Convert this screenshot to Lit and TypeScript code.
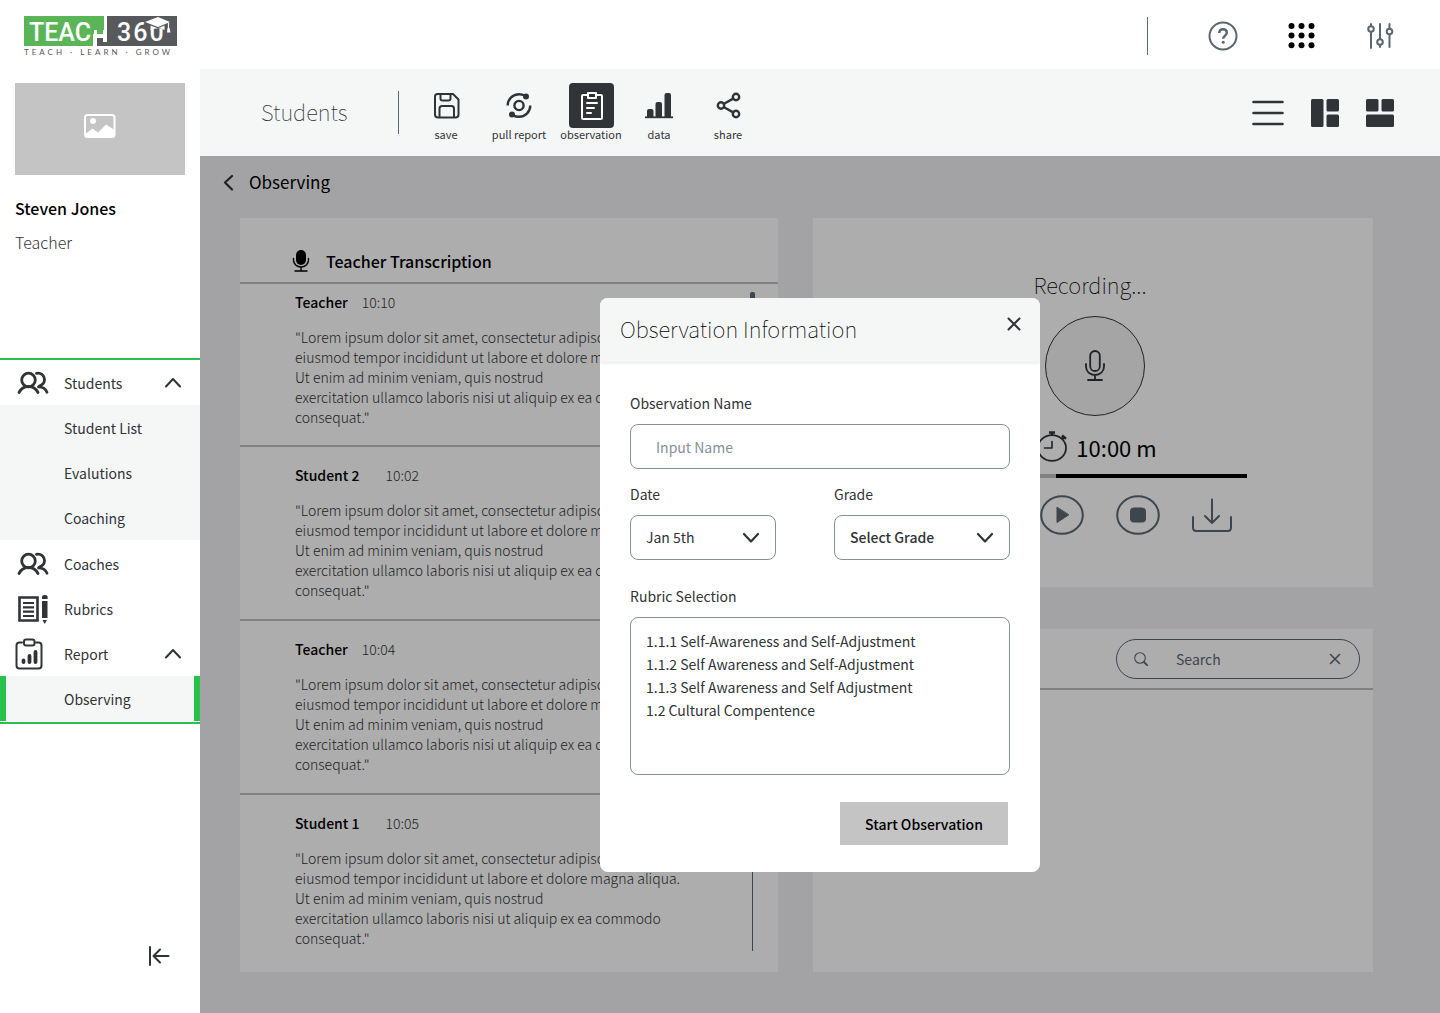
import { LitElement, html, css, svg, nothing } from "lit";
import { customElement, property, state } from "lit/decorators.js";
import { classMap } from "lit/directives/class-map.js";

/* ---------- shared styles ---------- */

const base = css`
  * {
    box-sizing: border-box;
  }
  :host {
    font-family: "Noto Sans CJK SC", "Noto Sans", sans-serif;
    font-size: 14px;
    line-height: 20px;
    color: #303437;
  }
  h1,
  h2,
  h3,
  p,
  ul {
    margin: 0;
    padding: 0;
    list-style: none;
  }
  button {
    font: inherit;
    color: inherit;
    background: none;
    border: 0;
    padding: 0;
    cursor: pointer;
  }
  a {
    color: inherit;
    text-decoration: none;
  }
  svg {
    display: block;
    flex: none;
  }
`;

/* ---------- icons ---------- */

const icon = (w: number, h: number, body: unknown) => html`<svg
  width=${w}
  height=${h}
  viewBox="0 0 ${w} ${h}"
  fill="none"
  stroke="currentColor"
  stroke-width="2"
  stroke-linecap="round"
  stroke-linejoin="round"
  aria-hidden="true"
>
  ${body}
</svg>`;

const icons = {
  people: icon(
    32,
    24,
    svg`<g stroke-width="2.800">
      <circle cx="11.500" cy="9" r="6.800"/>
      <path d="M2 21.500c2-4 5.200-6 9.500-6s7.500 2 9.500 6"/>
      <path d="M19.500 2.300c4.500-.8 8 2 8 6.200 0 3-1.800 5.200-4.500 6.200l-1.500 1.200c4 0 7 1.800 8.500 5.300"/>
    </g>`
  ),
  rubric: icon(
    34,
    32,
    svg`<path d="M3.500 4.500h18v23h-18z" stroke-width="2.600" stroke-linejoin="miter"/>
      <path d="M7 10h11M7 14.300h11M7 18.600h11M7 23h11" stroke-width="2.200" stroke-linecap="butt"/>
      <path d="M26 6V4q0-2 2.800-2t2.800 2v2zM26 8h5.500v17H26zM26.500 27H31l-2.300 4z" fill="currentColor" stroke="none"/>`
  ),
  report: icon(
    36,
    32,
    svg`<path d="M7 4.500H4.500Q1.500 4.500 1.500 7.500v20q0 3 3 3h19q3 0 3-3v-20q0-3-3-3H21" />
      <rect x="9" y="1.500" width="10.500" height="6" rx="2"/>
      <path d="M8.500 22.500V24M14.500 18V24M20.500 14V24" stroke-width="3.800"/>`
  ),
  chevronUp: icon(18, 11, svg`<path d="M2 9.500 9 2l7 7.500" stroke-width="2"/>`),
  chevronDown: icon(18, 11, svg`<path d="M2 2l7 7.500L16 2" stroke-width="2.200"/>`),
  chevronLeft: icon(11, 17, svg`<path d="M9 2 2 8.500 9 15.500" stroke-width="2.200"/>`),
  collapse: icon(22, 20, svg`<path d="M2 1v18M20.500 10H5.500M12 3.500 5.500 10l6.500 6.500" stroke-width="2"/>`),
  photo: icon(
    32,
    24,
    svg`<rect x="1" y="1" width="29.500" height="22" rx="2.500"/>
      <circle cx="9" cy="7" r="3" fill="currentColor" stroke="none"/>
      <path d="M2 19.500 8.500 14.500l5.500 4L22 10.500l8 5V22H2z" fill="currentColor" stroke="none"/>`
  ),
  help: icon(
    30,
    30,
    svg`<circle cx="15" cy="15" r="13.500"/>
      <path d="M11.300 12c0-2.300 1.500-3.700 3.800-3.700 2.200 0 3.700 1.300 3.700 3.300 0 2.900-3.600 3-3.600 6.200" stroke-width="2.400" stroke-linecap="butt"/>
      <circle cx="15.200" cy="21.300" r="1.500" fill="currentColor" stroke="none"/>`
  ),
  apps: icon(
    28,
    28,
    svg`${[4, 13.6, 23.2].map((y) =>
      [3.5, 13.5, 23.5].map((x) => svg`<circle cx=${x} cy=${y} r="3" fill="currentColor" stroke="none"/>`)
    )}`
  ),
  sliders: icon(
    28,
    28,
    svg`<path d="M5 2v1.500M5 10v16M14 2v14.500M14 23v2M23.500 2v4.500M23.500 13v12"/>
      <circle cx="5" cy="7" r="2.800"/><circle cx="14" cy="20" r="2.800"/><circle cx="23.500" cy="9.500" r="2.800"/>`
  ),
  save: icon(
    27,
    27,
    svg`<path d="M4.500 2h15.500L25.500 7.500v15q0 3-3 3H5q-3 0-3-3V4.500q0-2.500 2.500-2.500z"/>
      <path d="M7.500 2v4.500q0 2 2 2h6q2 0 2-2V2M6.500 25v-8.500q0-2.500 2.500-2.500h9.500q2.500 0 2.500 2.500V25"/>`
  ),
  pull: icon(
    27,
    27,
    svg`<circle cx="13" cy="13.500" r="4.600" stroke-width="2.400"/>
      <path d="M1.700 13.500C1.700 7 7 2.200 13 2.200c2 0 4 .3 5.500 1.300M24.300 13.500c0 6.500-5.300 11.300-11.300 11.300-2 0-4-.3-5.500-1.300" stroke-linecap="butt" stroke-width="2.400"/>
      <circle cx="20" cy="4.500" r="3" fill="currentColor" stroke="none"/>
      <circle cx="6" cy="22.500" r="3" fill="currentColor" stroke="none"/>`
  ),
  clipboard: icon(
    24,
    30,
    svg`<path d="M8 4H4q-1 0-1 1v22q0 1 1 1h18q1 0 1-1V5q0-1-1-1h-4M9 2h8v5H9zM8 12h10M8 17h7M8 22h4"/>`
  ),
  data: icon(
    28,
    27,
    svg`<path d="M2 25v-6q0-2 2-2h2.500q2 0 2 2v6zM10.500 25V12q0-2 2-2H15q2 0 2 2v13zM19.500 25V3q0-2 2-2H24q2 0 2 2v22z" fill="currentColor" stroke="none"/>
      <path d="M0 25.300h28" stroke-width="1.800" stroke-linecap="butt"/>`
  ),
  share: icon(
    26,
    27,
    svg`<g stroke-width="2.400"><circle cx="6" cy="13.500" r="3.200"/><circle cx="21" cy="5" r="3.200"/><circle cx="21" cy="22" r="3.200"/>
      <path d="M9 11.800 18.200 6.600M9 15.200l9.200 5.200"/></g>`
  ),
  menu: icon(32, 28, svg`<path d="M1.500 3h29M1.500 14h29M1.500 25h29" stroke-width="2.600"/>`),
  layoutSide: icon(
    28,
    28,
    svg`<g fill="currentColor" stroke="none"><rect width="12.500" height="28" rx="1.500"/><rect x="15.500" width="12.500" height="12.500" rx="1.500"/><rect x="15.500" y="15.500" width="12.500" height="12.500" rx="1.500"/></g>`
  ),
  layoutTop: icon(
    28,
    28,
    svg`<g fill="currentColor" stroke="none"><rect width="12.500" height="12.500" rx="1.500"/><rect x="15.500" width="12.500" height="12.500" rx="1.500"/><rect y="15.500" width="28" height="12.500" rx="1.500"/></g>`
  ),
  micSolid: icon(
    18,
    24,
    svg`<rect x="4" y="1" width="10" height="15" rx="5" fill="currentColor" stroke="none"/>
      <path d="M1.500 9.500v1.500c0 4 3.300 7 7.500 7s7.500-3 7.500-7V9.500M9 18v4M3 22h12" stroke-width="1.400"/>`
  ),
  mic: icon(
    20,
    32,
    svg`<rect x="5.200" y="1" width="9.600" height="20" rx="4.800" stroke-width="1.800"/>
      <path d="M1 14v2.500c0 5 4 8.500 9 8.500s9-3.500 9-8.500V14M10 25v5M3 30h14" stroke-width="1.800"/>`
  ),
  timer: icon(
    30,
    31,
    svg`<ellipse cx="15" cy="17" rx="14" ry="12.800" stroke-width="1.800"/>
      <path d="M15 10.500V17H7.500" stroke-width="1.600"/>
      <path d="M12 1.500h6M15 1.500v3M25 4.500l4 3.200M27 6l-2 2" stroke-width="2.600" stroke-linecap="butt"/>`
  ),
  play: icon(
    44,
    40,
    svg`<ellipse cx="22" cy="20" rx="20.800" ry="18.800"/>
      <path d="M17 12.500v15L28.500 20z" fill="currentColor" stroke-width="1"/>`
  ),
  stop: icon(
    44,
    40,
    svg`<ellipse cx="22" cy="20" rx="20.800" ry="18.800"/>
      <rect x="14" y="12.500" width="16" height="15" rx="4" fill="currentColor" stroke="none"/>`
  ),
  download: icon(
    40,
    34,
    svg`<path d="M1 19v10.500q0 3.500 3.500 3.500h31q3.500 0 3.500-3.500V19M20 1.500V25M13 18l7 7 7-7"/>`
  ),
  search: icon(14, 14, svg`<circle cx="6" cy="6" r="5.300" stroke-width="1.100"/><path d="M10 10l3.300 3.300" stroke-width="1.800"/>`),
  close: icon(14, 14, svg`<path d="M1.500 1.500l11 11M12.500 1.500l-11 11"/>`),
  closeSmall: icon(12, 12, svg`<path d="M1.500 1.500l9 9M10.500 1.500l-9 9" stroke-width="1.600"/>`),
};

const logo = html`<svg width="156" height="40" viewBox="0 0 156 40" role="img" aria-label="Teach 360">
  <path d="M0 0h80v18H69v12H0z" fill="#5ab557" />
  <path d="M83 0h70v30H73v-8h6v4h4z" fill="#58595c" />
  <path d="M70 14h3v4h6v-4h3v12h-3v-5h-6v4h-3z" fill="#fff" />
  <text x="5" y="25" font-family="Roboto, sans-serif" font-weight="500" font-size="25" fill="#fff">TEAC</text>
  <text x="93" y="25" font-family="Roboto, sans-serif" font-weight="500" font-size="25" letter-spacing="2" fill="#fff">360</text>
  <path d="M124 4h21v7l-5 2h-10l-5-1z" fill="#58595c" />
  <path d="M121 6 134 1l12 5-12 5z" fill="#fff" />
  <path d="M126.500 9.500v4.500q8-3.500 14 0V9.500l-6.500 2.700z" fill="#fff" />
  <path d="M144.500 7v6" stroke="#fff" stroke-width="1.200" />
  <path d="M143.500 12h2l1 4.500h-3.500z" fill="#fff" />
  <text x="0" y="39" font-family="Lato, sans-serif" font-size="8" letter-spacing="3" fill="#58595c">TEACH · LEARN · GROW</text>
</svg>`;

/* ---------- sidebar ---------- */

interface NavGroup {
  label: string;
  icon: unknown;
  children?: string[];
}

const NAV: NavGroup[] = [
  { label: "Students", icon: icons.people, children: ["Student List", "Evalutions", "Coaching"] },
  { label: "Coaches", icon: icons.people },
  { label: "Rubrics", icon: icons.rubric },
  { label: "Report", icon: icons.report, children: ["Observing"] },
];

@customElement("app-sidebar")
export class AppSidebar extends LitElement {
  @property() current = "Observing";
  @state() private closed = new Set<string>();

  static styles = [
    base,
    css`
      :host {
        display: flex;
        flex-direction: column;
        background: #fff;
      }
      .photo {
        display: grid;
        place-items: center;
        height: 92px;
        margin: 14px 15px 0;
        padding-bottom: 7px;
        background: #c4c4c4;
        color: #fff;
      }
      .who {
        display: flex;
        flex-direction: column;
        gap: 14px;
        padding: 23px 15px 106px;
        font-size: 16px;
      }
      .name {
        font-weight: 500;
        color: #000;
      }
      .role {
        font-weight: 300;
      }
      .nav {
        border-top: 2px solid #27c24c;
        border-bottom: 2px solid #27c24c;
      }
      .row {
        display: grid;
        grid-template-columns: 49px 1fr 18px;
        align-items: center;
        width: 100%;
        height: 45px;
        padding: 0 18px 0 15px;
        text-align: left;
      }
      .glyph {
        display: flex;
        justify-content: center;
        width: 36px;
      }
      .subs {
        margin-bottom: 1px;
      }
      .sub {
        display: flex;
        align-items: center;
        height: 45px;
        padding-left: 58px;
        border: solid #f5f7f7;
        border-width: 0 6px;
        background: #f5f7f7;
      }
      .active {
        border-color: #27c24c;
      }
      .flip {
        transform: rotate(180deg);
      }
      .collapse {
        align-self: flex-end;
        margin: auto 30px 47px 0;
      }
    `,
  ];

  private toggle(label: string) {
    const next = new Set(this.closed);
    next.has(label) ? next.delete(label) : next.add(label);
    this.closed = next;
  }

  private renderGroup(g: NavGroup) {
    const open = !this.closed.has(g.label);
    return html`<li>
      ${g.children
        ? html`<button class="row" aria-expanded=${open} @click=${() => this.toggle(g.label)}>
            <span class="glyph">${g.icon}</span><span>${g.label}</span>
            <span class=${classMap({ flip: !open })}>${icons.chevronUp}</span>
          </button>`
        : html`<a class="row" href="#"><span class="glyph">${g.icon}</span><span>${g.label}</span></a>`}
      ${g.children && open
        ? html`<ul class="subs">
            ${g.children.map(
              (c) => html`<li><a class=${classMap({ sub: true, active: c === this.current })} href="#">${c}</a></li>`
            )}
          </ul>`
        : nothing}
    </li>`;
  }

  render() {
    return html`
      <div class="photo">${icons.photo}</div>
      <div class="who">
        <p class="name">Steven Jones</p>
        <p class="role">Teacher</p>
      </div>
      <nav class="nav">
        <ul>
          ${NAV.map((g) => this.renderGroup(g))}
        </ul>
      </nav>
      <button class="collapse" aria-label="Collapse sidebar">${icons.collapse}</button>
    `;
  }
}

/* ---------- toolbar ---------- */

@customElement("app-toolbar")
export class AppToolbar extends LitElement {
  @property() active = "observation";

  static styles = [
    base,
    css`
      :host {
        display: flex;
        align-items: center;
        height: 87px;
        padding: 0 46px 0 61px;
        background: #f5f7f7;
      }
      .title {
        width: 137px;
        padding-bottom: 4px;
        font-size: 22px;
        font-weight: 100;
        line-height: 32px;
      }
      .rule {
        width: 1px;
        height: 43px;
        margin-right: 10px;
        background: #5b6770;
      }
      .tools {
        display: grid;
        grid-template-columns: 74px 72px 72px 64px 74px;
        align-self: flex-start;
        margin-top: 14px;
      }
      .tool {
        display: flex;
        flex-direction: column;
        align-items: center;
        font-size: 11px;
        line-height: 12px;
      }
      .tile {
        display: grid;
        place-items: center;
        width: 45px;
        height: 45px;
        border-radius: 4px;
      }
      .on {
        background: #303437;
        color: #fff;
      }
      .views {
        display: flex;
        align-items: center;
        gap: 27px;
        margin-left: auto;
      }
    `,
  ];

  render() {
    const tools: [string, unknown][] = [
      ["save", icons.save],
      ["pull report", icons.pull],
      ["observation", icons.clipboard],
      ["data", icons.data],
      ["share", icons.share],
    ];
    return html`
      <h1 class="title">Students</h1>
      <span class="rule"></span>
      <div class="tools">
        ${tools.map(
          ([label, glyph]) => html`<button class="tool">
            <span class=${classMap({ tile: true, on: label === this.active })}>${glyph}</span>${label}
          </button>`
        )}
      </div>
      <div class="views">
        <button aria-label="List view">${icons.menu}</button>
        <button aria-label="Side layout">${icons.layoutSide}</button>
        <button aria-label="Top layout">${icons.layoutTop}</button>
      </div>
    `;
  }
}

/* ---------- transcript ---------- */

const LOREM = `"Lorem ipsum dolor sit amet, consectetur adipiscing elit, sed do
eiusmod tempor incididunt ut labore et dolore magna aliqua.
Ut enim ad minim veniam, quis nostrud
exercitation ullamco laboris nisi ut aliquip ex ea commodo
consequat."`;

const ENTRIES = [
  { who: "Teacher", time: "10:10" },
  { who: "Student 2", time: "10:02" },
  { who: "Teacher", time: "10:04" },
  { who: "Student 1", time: "10:05" },
];

@customElement("transcript-panel")
export class TranscriptPanel extends LitElement {
  static styles = [
    base,
    css`
      :host {
        display: flex;
        flex-direction: column;
        background: #fff;
      }
      .head {
        display: flex;
        align-items: flex-end;
        gap: 16px;
        height: 66px;
        padding: 0 52px 9px;
        border-bottom: 2px solid #bfbfbf;
        color: #000;
      }
      .title {
        font-size: 16px;
        font-weight: 500;
        line-height: 24px;
      }
      .body {
        flex: 1;
        display: grid;
        grid-template-columns: 1fr 5px;
        padding-right: 23px;
      }
      .entry {
        padding: 18px 0 19px 55px;
        border-bottom: 2px solid #bfbfbf;
      }
      .entry:first-child {
        padding-top: 8px;
        padding-bottom: 18px;
      }
      .entry:last-child {
        border-bottom: 0;
      }
      .meta {
        display: flex;
        gap: 26px;
        margin-bottom: 15px;
      }
      .teacher {
        gap: 14px;
      }
      .who {
        font-size: 14px;
        font-weight: 500;
        color: #000;
      }
      .time,
      .text {
        font-weight: 300;
        white-space: pre;
      }
      .track {
        display: flex;
        flex-direction: column;
        align-items: center;
        margin: 8px 0 21px;
      }
      .thumb {
        width: 5px;
        height: 120px;
        border-radius: 2px;
        background: #5b6770;
      }
      .line {
        flex: 1;
        width: 1px;
        background: #5b6770;
      }
    `,
  ];

  render() {
    return html`
      <div class="head">${icons.micSolid}
        <h2 class="title">Teacher Transcription</h2>
      </div>
      <div class="body">
        <div>
          ${ENTRIES.map(
            (e) => html`<article class="entry">
              <div class=${classMap({ meta: true, teacher: e.who === "Teacher" })}>
                <h3 class="who">${e.who}</h3>
                <time class="time">${e.time}</time>
              </div>
              <p class="text">${LOREM}</p>
            </article>`
          )}
        </div>
        <div class="track"><span class="thumb"></span><span class="line"></span></div>
      </div>
    `;
  }
}

/* ---------- recorder ---------- */

@customElement("recorder-panel")
export class RecorderPanel extends LitElement {
  @property({ type: Number }) progress = 38;

  static styles = [
    base,
    css`
      :host {
        display: flex;
        flex-direction: column;
        align-items: center;
        min-height: 369px;
        padding: 50px 20px;
        background: #fff;
      }
      .title {
        margin-right: 6px;
        font-size: 22px;
        font-weight: 100;
        line-height: 32px;
        color: #000;
      }
      .mic {
        display: grid;
        place-items: center;
        width: 100px;
        height: 100px;
        margin: 16px 0 15px 4px;
        border: 1px solid currentColor;
        border-radius: 50%;
        background: #f3f3f3;
      }
      .timer {
        display: flex;
        align-items: center;
        gap: 9px;
        margin-left: 8px;
        font-size: 22px;
        line-height: 30px;
        padding-bottom: 2px;
      }
      .clock {
        color: #000;
      }
      .bar {
        width: 308px;
        height: 4px;
        margin: 10px 0 17px;
        background: #000;
      }
      .done {
        height: 100%;
        background: #bfbfbf;
      }
      .controls {
        display: flex;
        justify-content: flex-end;
        gap: 32px;
        width: 308px;
        padding-right: 15px;
        color: #5b6770;
      }
    `,
  ];

  render() {
    return html`
      <h2 class="title">Recording...</h2>
      <button class="mic" aria-label="Microphone">${icons.mic}</button>
      <div class="timer">${icons.timer}<span class="clock">10:00 m</span></div>
      <div class="bar" role="progressbar" aria-label="Recording progress" aria-valuenow=${this.progress}>
        <div class="done" style="width:${this.progress}%"></div>
      </div>
      <div class="controls">
        <button aria-label="Play">${icons.play}</button>
        <button aria-label="Stop">${icons.stop}</button>
        <button aria-label="Download">${icons.download}</button>
      </div>
    `;
  }
}

/* ---------- search panel ---------- */

@customElement("search-panel")
export class SearchPanel extends LitElement {
  static styles = [
    base,
    css`
      :host {
        display: block;
        background: #fff;
      }
      .head {
        display: flex;
        justify-content: flex-end;
        padding: 10px 13px 9px;
        border-bottom: 2px solid #bfbfbf;
      }
      .box {
        display: flex;
        align-items: center;
        width: 244px;
        height: 40px;
        padding: 0 18px 0 17px;
        border: 1px solid #5b6770;
        border-radius: 20px;
        color: #5b6770;
      }
      .input {
        flex: 1;
        min-width: 0;
        margin-left: 28px;
        padding: 0;
        border: 0;
        outline: 0;
        background: none;
        font: inherit;
        color: inherit;
      }
      .input::placeholder {
        color: inherit;
        opacity: 1;
      }
    `,
  ];

  render() {
    return html`<div class="head">
      <div class="box">
        ${icons.search}
        <input class="input" type="text" placeholder="Search" aria-label="Search" />
        <button aria-label="Clear search">${icons.closeSmall}</button>
      </div>
    </div>`;
  }
}

/* ---------- observation dialog ---------- */

@customElement("observation-dialog")
export class ObservationDialog extends LitElement {
  static styles = [
    base,
    css`
      :host {
        display: block;
        width: 440px;
        max-width: 100%;
        border-radius: 8px;
        background: #fff;
        overflow: hidden;
      }
      .head {
        display: flex;
        justify-content: space-between;
        align-items: flex-start;
        height: 64px;
        padding: 14px 19px 0 20px;
        background: #f5f7f7;
        box-shadow: 0 1px 3px rgba(0, 0, 0, 0.1);
      }
      .title {
        font-size: 22px;
        font-weight: 100;
        line-height: 32px;
        color: #000;
      }
      .close {
        padding-top: 5px;
      }
      .form {
        display: grid;
        grid-template-columns: 146fr 176fr;
        column-gap: 58px;
        padding: 31px 30px 27px;
      }
      .field {
        display: flex;
        flex-direction: column;
        gap: 11px;
        margin-bottom: 15px;
      }
      .wide {
        grid-column: 1 / -1;
      }
      .roomy {
        margin-bottom: 26px;
      }
      .control {
        width: 100%;
        height: 45px;
        margin: 0;
        border: 1px solid #84919a;
        border-radius: 8px;
        outline: 0;
        background: #fff;
        font: inherit;
        color: inherit;
        appearance: none;
      }
      .text {
        padding: 2px 25px 0;
      }
      .text::placeholder {
        color: #84919a;
        opacity: 1;
      }
      .pick {
        display: grid;
        align-items: center;
      }
      .pick > * {
        grid-area: 1 / 1;
      }
      .pick svg {
        justify-self: end;
        margin-right: 16px;
        pointer-events: none;
      }
      .drop {
        padding: 0 15px;
      }
      .strong {
        font-weight: 500;
      }
      .list {
        height: 158px;
        padding: 13px 15px;
      }
      .list option {
        height: 23px;
        padding: 0;
        line-height: 23px;
      }
      .start {
        grid-column: 1 / -1;
        justify-self: end;
        width: 168px;
        height: 43px;
        margin: 1px 2px 0 0;
        padding-top: 2px;
        background: #c4c4c4;
        color: #000;
        font-weight: 500;
      }
    `,
  ];

  render() {
    return html`
      <div class="head">
        <h2 class="title">Observation Information</h2>
        <button class="close" aria-label="Close">${icons.close}</button>
      </div>
      <form class="form" @submit=${(e: Event) => e.preventDefault()}>
        <div class="field wide">
          <label for="name">Observation Name</label>
          <input id="name" class="control text" type="text" placeholder="Input Name" />
        </div>
        <div class="field roomy">
          <label for="date">Date</label>
          <div class="pick">
            <select id="date" class="control drop"><option>Jan 5th</option></select>${icons.chevronDown}
          </div>
        </div>
        <div class="field roomy">
          <label for="grade">Grade</label>
          <div class="pick">
            <select id="grade" class="control drop strong"><option>Select Grade</option></select>${icons.chevronDown}
          </div>
        </div>
        <div class="field wide roomy">
          <label for="rubric">Rubric Selection</label>
          <select id="rubric" class="control list" multiple>
            <option>1.1.1 Self-Awareness and Self-Adjustment</option>
            <option>1.1.2 Self Awareness and Self-Adjustment</option>
            <option>1.1.3 Self Awareness and Self Adjustment</option>
            <option>1.2 Cultural Compentence</option>
          </select>
        </div>
        <button class="start" type="submit">Start Observation</button>
      </form>
    `;
  }
}

/* ---------- page ---------- */

@customElement("app-root")
export class AppRoot extends LitElement {
  static styles = [
    base,
    css`
      :host {
        display: grid;
        grid-template: auto auto 1fr / 200px minmax(0, 1fr);
        min-height: 100vh;
        background: #fff;
      }
      .top {
        grid-column: 1 / -1;
        display: flex;
        justify-content: space-between;
        align-items: center;
        height: 69px;
        padding: 2px 46px 0 24px;
      }
      .top-actions {
        display: flex;
        align-items: center;
        gap: 50px;
        color: #5b6770;
      }
      .rule {
        width: 1px;
        height: 38px;
        margin-right: 10px;
        background: #5b6770;
      }
      .apps {
        color: #000;
      }
      .side {
        grid-row: 2 / 4;
      }
      .work {
        position: relative;
        padding: 0 67px 41px 40px;
        background: #f0f1f4;
      }
      .crumb {
        display: flex;
        align-items: center;
        gap: 15px;
        height: 52px;
        margin: 0 0 10px -17px;
        font-size: 17px;
        color: #000;
      }
      .crumb svg {
        color: #303437;
      }
      .panels {
        display: grid;
        grid-template-columns: 538fr 560fr;
        gap: 35px;
        min-height: calc(100vh - 259px);
      }
      .right {
        display: grid;
        grid-template-rows: auto 1fr;
        gap: 42px;
      }
      .scrim {
        position: absolute;
        inset: 0;
        display: grid;
        place-items: center;
        background: rgba(0, 0, 0, 0.32);
      }
    `,
  ];

  render() {
    return html`
      <header class="top">
        <a href="#">${logo}</a>
        <div class="top-actions">
          <span class="rule"></span>
          <button aria-label="Help">${icons.help}</button>
          <button class="apps" aria-label="Apps">${icons.apps}</button>
          <button aria-label="Settings">${icons.sliders}</button>
        </div>
      </header>
      <app-sidebar class="side"></app-sidebar>
      <app-toolbar></app-toolbar>
      <main class="work">
        <a class="crumb" href="#">${icons.chevronLeft}<span>Observing</span></a>
        <div class="panels">
          <transcript-panel></transcript-panel>
          <div class="right">
            <recorder-panel></recorder-panel>
            <search-panel></search-panel>
          </div>
        </div>
        <div class="scrim">
          <observation-dialog role="dialog" aria-modal="true" aria-label="Observation Information"></observation-dialog>
        </div>
      </main>
    `;
  }
}
